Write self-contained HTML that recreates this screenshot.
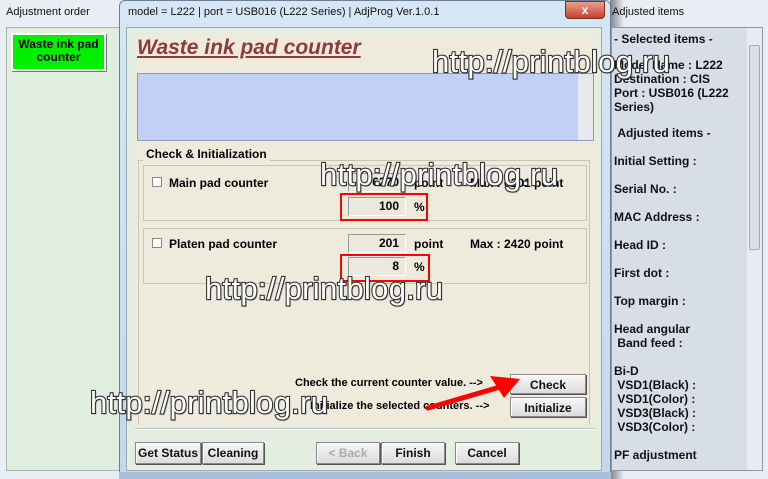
<!DOCTYPE html>
<html><head><meta charset="utf-8"><style>
*{margin:0;padding:0;box-sizing:border-box}
body{width:768px;height:479px;overflow:hidden;background:#dfe9f0;font-family:"Liberation Sans",sans-serif;position:relative;font-size:12px}
.a{position:absolute}
.b{font-weight:bold}
.btn{position:absolute;background:linear-gradient(#f6f6f6,#dcdcdc);border:1px solid #888;box-shadow:inset 1px 1px #fff,1px 1px #555;font-weight:bold;font-size:12px;text-align:center;line-height:20px;color:#111}
.fld{position:absolute;background:#ece8dd;border:1px solid #999;border-right-color:#fff;border-bottom-color:#fff;text-align:right;padding-right:6px;font-weight:bold;line-height:17px}
.wm{position:absolute;font-size:31px;color:#fff;-webkit-text-stroke:2.2px #333;paint-order:stroke fill;font-family:"Liberation Sans",sans-serif;letter-spacing:0.3px;white-space:nowrap;text-shadow:1px 1px 1px #333}
</style></head><body>
<div class="a" style="left:0;top:0;width:126px;height:479px;background:#e8eef4;border-right:1px solid #8a9aaa"></div>
<div class="a" style="left:6px;top:6px;font-size:11px;color:#111">Adjustment order</div>
<div class="a" style="left:6px;top:27px;width:114px;height:444px;background:#e0eedf;border:1px solid #a8b8a8"></div>
<div class="a b" style="left:11px;top:33px;width:95px;height:38px;background:#00f000;border:2px solid #fff;box-shadow:1px 1px #777;text-align:center;font-size:12px;line-height:13px;padding-top:3px">Waste ink pad<br>counter</div>
<div class="a" style="left:608px;top:0;width:160px;height:479px;background:#e8eef4"></div>
<div class="a" style="left:610px;top:0;width:14px;height:479px;background:linear-gradient(90deg,rgba(0,0,0,.45),rgba(0,0,0,0))"></div>
<div class="a" style="left:612px;top:6px;font-size:11px;color:#111">Adjusted items</div>
<div class="a" style="left:611px;top:27px;width:152px;height:444px;background:#d7dee7;border:1px solid #8a9aaa"></div>
<div class="a" style="left:747px;top:28px;width:15px;height:442px;background:#e8ebef"></div>
<div class="a" style="left:749px;top:45px;width:11px;height:205px;background:#dcdfe4;border:1px solid #aab;border-radius:2px"></div>
<div class="a b" style="left:614px;top:32px;font-size:12px;line-height:14px;color:#111">
<div>- Selected items -</div>
<div style="margin-top:12px">Model Name : L222<br>Destination : CIS<br>Port : USB016 (L222<br>Series)</div>
<div style="margin-top:12px">&nbsp;Adjusted items -</div>
<div style="margin-top:14px">Initial Setting :</div>
<div style="margin-top:14px">Serial No. :</div>
<div style="margin-top:14px">MAC Address :</div>
<div style="margin-top:14px">Head ID :</div>
<div style="margin-top:14px">First dot :</div>
<div style="margin-top:14px">Top margin :</div>
<div style="margin-top:14px">Head angular<br>&nbsp;Band feed :</div>
<div style="margin-top:14px">Bi-D<br>&nbsp;VSD1(Black) :<br>&nbsp;VSD1(Color) :<br>&nbsp;VSD3(Black) :<br>&nbsp;VSD3(Color) :</div>
<div style="margin-top:14px">PF adjustment</div>
</div>
<div class="a" style="left:119px;top:0;width:492px;height:479px;background:linear-gradient(#d6e6f5,#c4d8ec);border:1px solid #6d7f92;border-radius:6px 6px 0 0"></div>
<div class="a" style="left:128px;top:6px;font-size:11px;color:#111">model = L222 | port = USB016 (L222 Series) | AdjProg Ver.1.0.1</div>
<div class="a" style="left:565px;top:1px;width:40px;height:18px;background:linear-gradient(#e8a090,#c8402a);border:1px solid #7a3020;border-radius:0 0 4px 4px;color:#fff;font-weight:bold;text-align:center;line-height:16px">x</div>
<div class="a" style="left:126px;top:27px;width:476px;height:444px;background:#e3eee0;border:1px solid #9aaaba"></div>
<div class="a" style="left:135px;top:34px;width:460px;height:392px;background:#efebdc"></div>
<div class="a" style="left:137px;top:36px;font-size:21px;font-weight:bold;font-style:italic;color:#8b3c3c;text-decoration:underline">Waste ink pad counter</div>
<div class="a" style="left:137px;top:73px;width:457px;height:68px;background:#c2d0f5;border:1px solid #8a9ab8"></div>
<div class="a" style="left:578px;top:74px;width:15px;height:66px;background:#e6e9ee"></div>
<div class="a" style="left:138px;top:160px;width:452px;height:265px;border:1px solid #c8c4b8;border-bottom:none"></div>
<div class="a b" style="left:143px;top:147px;padding:0 3px;background:#efebdc;font-size:12px">Check &amp; Initialization</div>
<div class="a" style="left:143px;top:165px;width:444px;height:56px;border:1px solid #c8c4b8"></div>
<div class="a" style="left:143px;top:228px;width:444px;height:56px;border:1px solid #c8c4b8"></div>
<div class="a" style="left:152px;top:177px;width:10px;height:10px;background:#fff;border:1px solid #888"></div>
<div class="a b" style="left:169px;top:176px">Main pad counter</div>
<div class="fld" style="left:348px;top:173px;width:58px;height:19px">6270</div>
<div class="a b" style="left:414px;top:176px">point</div>
<div class="a b" style="left:470px;top:176px">Max : 6201 point</div>
<div class="fld" style="left:348px;top:197px;width:58px;height:19px">100</div>
<div class="a b" style="left:414px;top:200px">%</div>
<div class="a" style="left:340px;top:193px;width:88px;height:28px;border:2px solid #f00"></div>
<div class="a" style="left:152px;top:238px;width:10px;height:10px;background:#fff;border:1px solid #888"></div>
<div class="a b" style="left:169px;top:237px">Platen pad counter</div>
<div class="fld" style="left:348px;top:234px;width:58px;height:19px">201</div>
<div class="a b" style="left:414px;top:237px">point</div>
<div class="a b" style="left:470px;top:237px">Max : 2420 point</div>
<div class="fld" style="left:348px;top:257px;width:58px;height:19px">8</div>
<div class="a b" style="left:414px;top:260px">%</div>
<div class="a" style="left:340px;top:254px;width:90px;height:28px;border:2px solid #f00"></div>
<div class="a b" style="left:295px;top:377px;font-size:11px">Check the current counter value. --&gt;</div>
<div class="a b" style="left:310px;top:400px;font-size:11px">Initialize the selected counters. --&gt;</div>
<div class="btn" style="left:510px;top:374px;width:76px;height:20px">Check</div>
<div class="btn" style="left:510px;top:397px;width:76px;height:20px">Initialize</div>
<div class="a" style="left:135px;top:428px;width:460px;height:1px;background:#b8c4b8;box-shadow:0 1px #fff"></div>
<div class="btn" style="left:135px;top:442px;width:66px;height:22px">Get Status</div>
<div class="btn" style="left:202px;top:442px;width:62px;height:22px">Cleaning</div>
<div class="btn" style="left:316px;top:442px;width:64px;height:22px;color:#aaa">&lt; Back</div>
<div class="btn" style="left:381px;top:442px;width:64px;height:22px">Finish</div>
<div class="btn" style="left:455px;top:442px;width:64px;height:22px">Cancel</div>
<div class="a" style="left:119px;top:472px;width:492px;height:7px;background:#a8c0dc"></div>
<svg class="a" style="left:420px;top:370px" width="110" height="45"><path d="M8 38 L80 17" stroke="#f00" stroke-width="5" stroke-linecap="round"/><path d="M100 9 L70 6 L84 28 Z" fill="#f00"/></svg>
<div class="wm" style="left:432px;top:44px">http://printblog.ru</div>
<div class="wm" style="left:320px;top:157px">http://printblog.ru</div>
<div class="wm" style="left:205px;top:271px">http://printblog.ru</div>
<div class="wm" style="left:90px;top:385px">http://printblog.ru</div>
</body></html>
